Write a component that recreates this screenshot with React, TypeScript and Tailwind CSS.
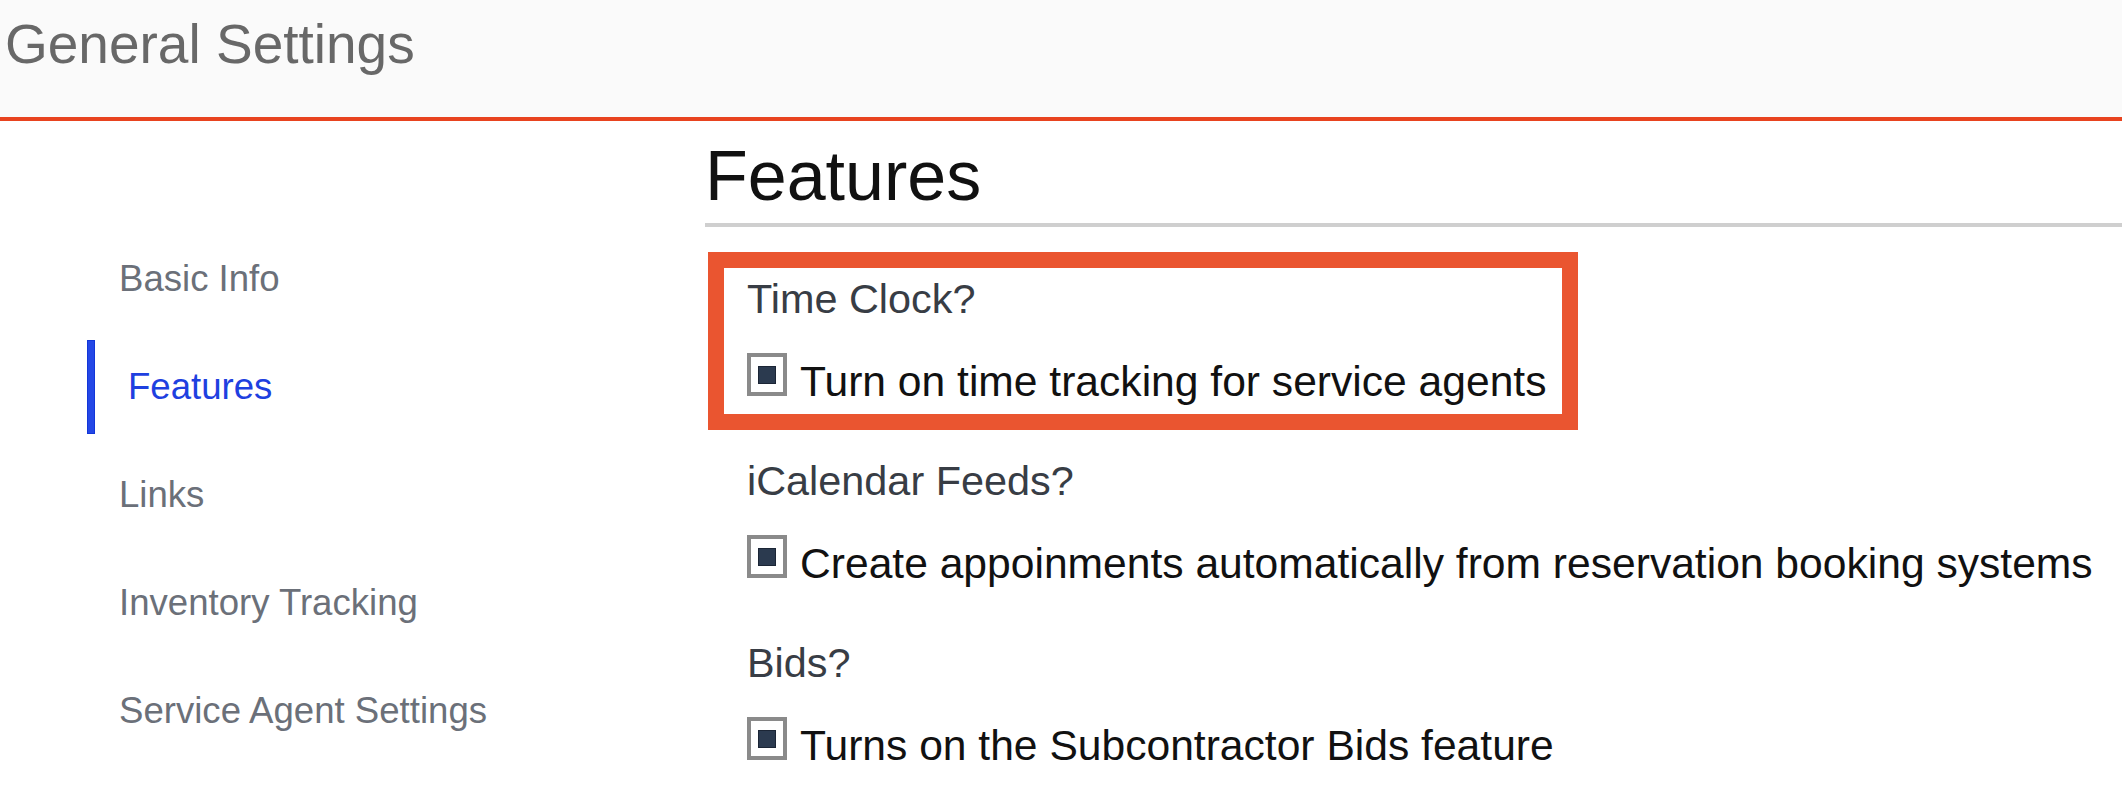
import React from "react";

const navItems = [
  { label: "Basic Info", active: false },
  { label: "Features", active: true },
  { label: "Links", active: false },
  { label: "Inventory Tracking", active: false },
  { label: "Service Agent Settings", active: false },
  { label: "Notification Settings", active: false },
];

const sections = [
  { title: "Time Clock?", text: "Turn on time tracking for service agents", highlight: true },
  { title: "iCalendar Feeds?", text: "Create appoinments automatically from reservation booking systems", highlight: false },
  { title: "Bids?", text: "Turns on the Subcontractor Bids feature", highlight: false },
];

function Checkbox() {
  return (
    <span className="mb-[9px] flex h-[43px] w-[40px] shrink-0 items-center justify-center border-[4px] border-[#8a8a8a] bg-white">
      <span className="block h-[18px] w-[18px] border border-[#1b2535] bg-[#2b3a4f]" />
    </span>
  );
}

export default function App() {
  return (
    <div
      className="h-[804px] w-[2122px] overflow-hidden bg-white"
      style={{ fontFamily: '"Liberation Sans", Arial, sans-serif' }}
    >
      <header className="h-[121px] border-b-[4px] border-[#e8431f] bg-[#fafafa] pl-[5px] pt-[12px]">
        <h1 className="text-[55px] font-normal leading-[64px] text-[#686868]">General Settings</h1>
      </header>

      <div className="flex">
        <nav className="w-[705px] shrink-0 pl-[87px] pt-[104px]">
          {navItems.map((item) => (
            <div key={item.label} className="flex h-[108px] items-center">
              <span
                className={
                  item.active
                    ? "block h-[94px] w-[8px] border border-[#1236d8] bg-[#2447e6]"
                    : "block h-[94px] w-[8px]"
                }
              />
              <span
                className={
                  item.active
                    ? "ml-[33px] text-[36.6px] leading-[108px] text-[#1e40e0]"
                    : "ml-[24px] text-[36.6px] leading-[108px] text-[#6b7079]"
                }
              >
                {item.label}
              </span>
            </div>
          ))}
        </nav>

        <main className="flex-1 pt-[20px]">
          <h2 className="text-[70px] font-normal leading-[70px] text-[#111111]">Features</h2>
          <div className="mt-[12px] h-[4px] bg-[#cfcfcf]" />

          <div className="flex flex-col gap-[52px] pl-[42px] pt-[48px]">
            {sections.map((s) => (
              <section key={s.title} className="relative">
                {s.highlight && (
                  <div className="pointer-events-none absolute left-[-39px] top-[-23px] h-[178px] w-[870px] border-[16px] border-[#ea5530]" />
                )}
                <div className="text-[41.4px] leading-[48px] text-[#383d45]">{s.title}</div>
                <div className="mt-[34px] flex h-[48px] items-end gap-[13px]">
                  <Checkbox />
                  <span className="whitespace-nowrap text-[42.6px] leading-[48px] text-[#111111]">{s.text}</span>
                </div>
              </section>
            ))}
          </div>
        </main>
      </div>
    </div>
  );
}
